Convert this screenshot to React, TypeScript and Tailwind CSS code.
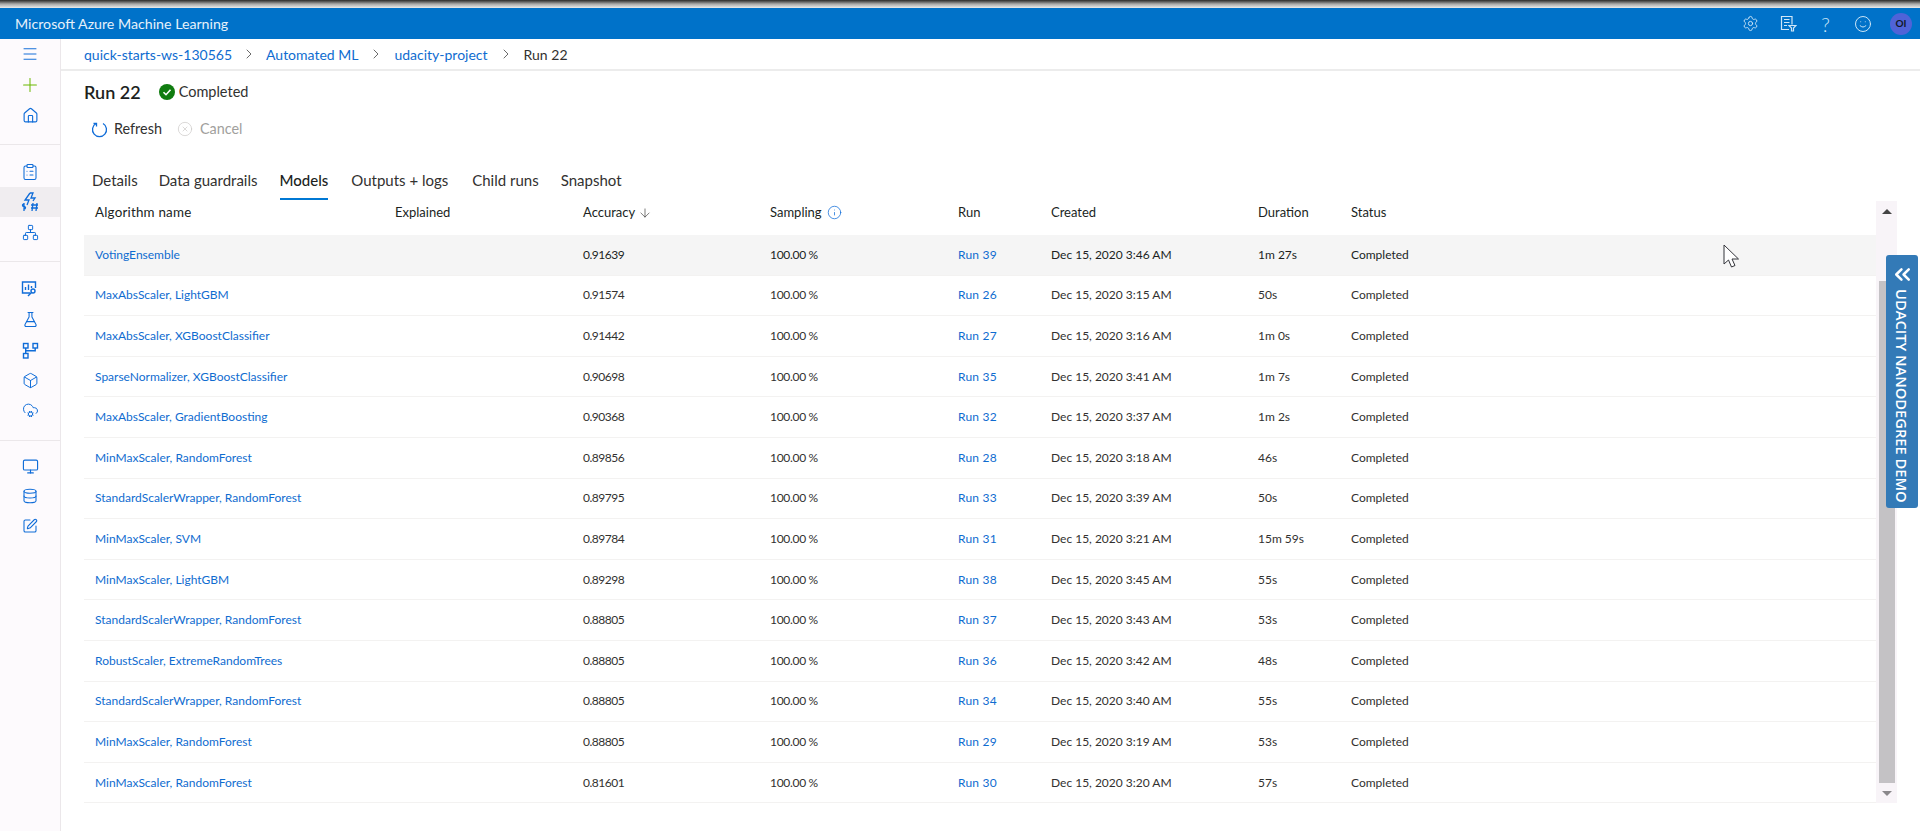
import { ArrowDown, Box, ChevronRight, ChevronsLeft, CircleX, ClipboardList, CloudCog, Database, FlaskConical, Home, Info, Menu, Monitor, Network, Plus, Settings, Smile, SquarePen } from 'lucide-react';

const rows = [
  ['VotingEnsemble', '0.91639', 'Run 39', 'Dec 15, 2020 3:46 AM', '1m 27s'],
  ['MaxAbsScaler, LightGBM', '0.91574', 'Run 26', 'Dec 15, 2020 3:15 AM', '50s'],
  ['MaxAbsScaler, XGBoostClassifier', '0.91442', 'Run 27', 'Dec 15, 2020 3:16 AM', '1m 0s'],
  ['SparseNormalizer, XGBoostClassifier', '0.90698', 'Run 35', 'Dec 15, 2020 3:41 AM', '1m 7s'],
  ['MaxAbsScaler, GradientBoosting', '0.90368', 'Run 32', 'Dec 15, 2020 3:37 AM', '1m 2s'],
  ['MinMaxScaler, RandomForest', '0.89856', 'Run 28', 'Dec 15, 2020 3:18 AM', '46s'],
  ['StandardScalerWrapper, RandomForest', '0.89795', 'Run 33', 'Dec 15, 2020 3:39 AM', '50s'],
  ['MinMaxScaler, SVM', '0.89784', 'Run 31', 'Dec 15, 2020 3:21 AM', '15m 59s'],
  ['MinMaxScaler, LightGBM', '0.89298', 'Run 38', 'Dec 15, 2020 3:45 AM', '55s'],
  ['StandardScalerWrapper, RandomForest', '0.88805', 'Run 37', 'Dec 15, 2020 3:43 AM', '53s'],
  ['RobustScaler, ExtremeRandomTrees', '0.88805', 'Run 36', 'Dec 15, 2020 3:42 AM', '48s'],
  ['StandardScalerWrapper, RandomForest', '0.88805', 'Run 34', 'Dec 15, 2020 3:40 AM', '55s'],
  ['MinMaxScaler, RandomForest', '0.88805', 'Run 29', 'Dec 15, 2020 3:19 AM', '53s'],
  ['MinMaxScaler, RandomForest', '0.81601', 'Run 30', 'Dec 15, 2020 3:20 AM', '57s'],
];

const gridCols = 'grid grid-cols-[300px_188px_187px_188px_93px_207px_93px_1fr] pl-[11px] items-center';

const AutoMlIcon = () => (
  <svg width="18" height="20" viewBox="0 0 18 20" fill="none" stroke="#0f6cd8" strokeWidth="1.3">
    <path d="M9 1 4 8h4l-2 5" />
    <path d="M9 1h3L10 6h4l-2 3" />
    <path d="M3 12c-2 0-2 2.500 0 2.500s2 2.500 0 2.500M3 11v8" />
    <path d="M10 13h7M10 16h7M12 11l-1 8M16 11l-1 8" />
  </svg>
);

const DashboardIcon = () => (
  <svg width="18" height="18" viewBox="0 0 18 18" fill="none" stroke="#0f6cd8" strokeWidth="1.4">
    <path d="M9 13H1.500V2h13v6" />
    <path d="M4.500 10V7M7.500 10V4.500M10.500 8V6" />
    <circle cx="12" cy="11" r="2" />
    <path d="M10.500 12.500 7 16" />
  </svg>
);

const PipelineIcon = () => (
  <svg width="17" height="17" viewBox="0 0 17 17" fill="none" stroke="#0f6cd8" strokeWidth="1.4">
    <rect x="1.500" y="1.500" width="4.500" height="4.500" />
    <rect x="11" y="1.500" width="4.500" height="4.500" />
    <rect x="1.500" y="11.500" width="4.500" height="4.500" />
    <path d="M3.700 6v5.500M3.700 8.800h9.500V6" />
  </svg>
);

const FeedbackSheetIcon = () => (
  <svg width="17" height="17" viewBox="0 0 17 17" fill="none" stroke="#cfe6f7" strokeWidth="1.2">
    <path d="M9 14.500H1.500V1.500h10.500v8" />
    <path d="M4 4.500h5.500M4 7.500h5.500M4 10.500h3" />
    <path d="M9 10.500h7l-2.500 2.500v3H11.500v-3z" />
  </svg>
);

const Sidebar = () => (
  <aside className="w-[61px] shrink-0 bg-[#fdfafd] border-r border-[#ebe7ea] flex flex-col items-stretch text-[#0f6cd8]">
    <div className="h-[30px] flex items-center justify-center"><Menu size={18} strokeWidth={1.3} /></div>
    <div className="h-[32px] flex items-center justify-center text-[#6bb700]"><Plus size={22} strokeWidth={1.1} /></div>
    <div className="h-[28px] flex items-center justify-center"><Home size={17} strokeWidth={1.6} /></div>
    <div className="h-[16px] border-b border-[#ebe7ea] mb-[12px]" />
    <div className="h-[30px] flex items-center justify-center"><ClipboardList size={18} strokeWidth={1.4} /></div>
    <div className="h-[30px] flex items-center justify-center bg-[#f0edf0]"><AutoMlIcon /></div>
    <div className="h-[30px] flex items-center justify-center"><Network size={17} strokeWidth={1.4} /></div>
    <div className="h-[15px] border-b border-[#ebe7ea] mb-[12px]" />
    <div className="h-[30px] flex items-center justify-center"><DashboardIcon /></div>
    <div className="h-[31px] flex items-center justify-center"><FlaskConical size={17} strokeWidth={1.5} /></div>
    <div className="h-[30px] flex items-center justify-center"><PipelineIcon /></div>
    <div className="h-[30px] flex items-center justify-center"><Box size={17} strokeWidth={1.4} /></div>
    <div className="h-[30px] flex items-center justify-center"><CloudCog size={17} strokeWidth={1.4} /></div>
    <div className="h-[16px] border-b border-[#ebe7ea] mb-[10px]" />
    <div className="h-[30px] flex items-center justify-center"><Monitor size={17} strokeWidth={1.6} /></div>
    <div className="h-[30px] flex items-center justify-center"><Database size={16} strokeWidth={1.6} /></div>
    <div className="h-[30px] flex items-center justify-center"><SquarePen size={16} strokeWidth={1.6} /></div>
  </aside>
);

const App = () => {
  return (
    <div className="relative h-[831px] w-[1920px] overflow-hidden bg-white flex flex-col font-['Lato','Open_Sans',sans-serif] text-[#323130]">
      <div className="h-[8px] bg-gradient-to-b from-[#2b2b2b] via-[#a9a9a9] to-[#ececec]" />
      {/* top bar */}
      <header className="h-[31px] bg-[#0072c9] flex items-center justify-between pl-[15px] text-white">
        <span className="text-[14.2px] text-[#e6f1fa]">Microsoft Azure Machine Learning</span>
        <div className="flex items-center text-[#cfe6f7]">
          <Settings size={17} strokeWidth={1.3} />
          <span className="ml-[21px]"><FeedbackSheetIcon /></span>
          <span className="ml-[24px] text-[20px] leading-none font-light">?</span>
          <Smile size={18} strokeWidth={1.3} className="ml-[24px]" />
          <span className="ml-[18px] mr-[8px] w-[22px] h-[22px] rounded-full bg-[#4f63d8] flex items-center justify-center text-[10px] font-bold text-[#111827]">OI</span>
        </div>
      </header>
      <div className="flex flex-1 min-h-0">
        <Sidebar />
        <main className="flex-1 min-w-0 flex flex-col">
          {/* breadcrumb */}
          <nav className="h-[32px] border-b-2 border-[#ececec] flex items-center pl-[23px] text-[14px] text-[#0f6cd0]">
            <span>quick-starts-ws-130565</span>
            <ChevronRight size={16} strokeWidth={1.2} className="mx-[9px] text-[#444]" />
            <span>Automated ML</span>
            <ChevronRight size={16} strokeWidth={1.2} className="mx-[10px] text-[#444]" />
            <span>udacity-project</span>
            <ChevronRight size={16} strokeWidth={1.2} className="mx-[10px] text-[#444]" />
            <span className="text-[#323130]">Run 22</span>
          </nav>
          {/* title */}
          <div className="h-[42px] flex items-center pl-[23px]">
            <h1 className="text-[18px] font-semibold text-[#201f1e]">Run 22</h1>
            <svg width="16" height="16" viewBox="0 0 16 16" className="ml-[18px]">
              <circle cx="8" cy="8" r="8" fill="#107c10" />
              <path d="M4.500 8.200 7 10.700l4.500-5" fill="none" stroke="#fff" strokeWidth="1.600" />
            </svg>
            <span className="ml-[4px] text-[14.5px]">Completed</span>
          </div>
          {/* toolbar */}
          <div className="h-[32px] flex items-center pl-[30px] text-[14.4px]">
            <svg width="17" height="18" viewBox="0 0 17 18" fill="none" stroke="#0f6cd8" strokeWidth="1.300">
              <path d="M5 3.500a7 7 0 1 0 7 0" />
              <path d="M2.500 3.500H5.500V6.500" />
            </svg>
            <span className="ml-[6px]">Refresh</span>
            <CircleX size={16} strokeWidth={1} className="ml-[15px] text-[#c8c6c4]" />
            <span className="ml-[7px] text-[#a19f9d]">Cancel</span>
          </div>
          {/* tabs */}
          <div className="h-[56px] flex items-start pt-[25px] pl-[31px] gap-[22px] text-[15px] leading-[20px]">
            <span>Details</span>
            <span className="-ml-[1px]">Data guardrails</span>
            <span className="h-[30px] border-b-[2px] border-[#0078d4] text-[#201f1e] font-medium">Models</span>
            <span className="ml-[1px]">Outputs + logs</span>
            <span className="ml-[2px]">Child runs</span>
            <span>Snapshot</span>
          </div>
          {/* table and its scrollbar */}
          <div className="flex ml-[23px] mr-[23px]">
            <div className="flex-1 min-w-0 text-[12px]">
              <div className={`${gridCols} h-[34px] pb-[11px] text-[13px] text-[#201f1e]`}>
                <span className="tracking-[0.2px] text-[13.4px]">Algorithm name</span>
                <span>Explained</span>
                <span className="flex items-center gap-[3px]">Accuracy <ArrowDown size={14} strokeWidth={1} /></span>
                <span className="flex items-center gap-[5px]">Sampling <Info size={15} strokeWidth={1.200} className="text-[#0f6cd8]" /></span>
                <span>Run</span>
                <span>Created</span>
                <span>Duration</span>
                <span>Status</span>
              </div>
              {rows.map((r, i) => (
                <div key={i} className={`${gridCols} h-[40.6px] border-b border-[#f3f2f1] ${i === 0 ? 'bg-[#f5f5f5] text-[#201f1e]' : ''}`}>
                  <span className="text-[#0f6cd0]">{r[0]}</span>
                  <span />
                  <span className="tracking-[-0.5px]">{r[1]}</span>
                  <span className="tracking-[-0.3px]">100.00 %</span>
                  <span className="text-[#0f6cd0] tracking-[0.2px]">{r[2]}</span>
                  <span>{r[3]}</span>
                  <span>{r[4]}</span>
                  <span>Completed</span>
                </div>
              ))}
            </div>
            <div className="w-[21px] h-[602px] bg-[#f8f4f8] flex flex-col items-center">
              <div className="h-[21px] flex items-center justify-center">
                <div className="w-0 h-0 border-x-[5px] border-x-transparent border-b-[5px] border-b-[#444]" />
              </div>
              <div className="w-[16px] h-[502px] mt-[59px] bg-[#c4c2c5]" />
              <div className="h-[20px] flex items-center justify-center">
                <div className="w-0 h-0 border-x-[5px] border-x-transparent border-t-[5px] border-t-[#8a888b]" />
              </div>
            </div>
          </div>
        </main>
      </div>
      {/* floating udacity tab */}
      <div className="absolute left-[1886px] top-[255px] w-[32px] h-[253px] bg-[#337ab7] rounded-[3px] flex flex-col items-center text-white pt-[7px]">
        <ChevronsLeft size={25} strokeWidth={2.4} className="shrink-0" />
        <span className="[writing-mode:vertical-rl] text-[14.7px] font-['Open_Sans',sans-serif] font-semibold whitespace-nowrap mt-[2px]">UDACITY NANODEGREE DEMO</span>
      </div>
      {/* mouse pointer */}
      <svg className="absolute left-[1723px] top-[244px]" width="17" height="26" viewBox="0 0 17 26" fill="#fff" stroke="#33343a" strokeWidth="1">
        <path d="M1 1v19l4.500-4 3 7 3.500-1.500-3-6.500h6.500z" />
      </svg>
    </div>
  );
};

export default App;
